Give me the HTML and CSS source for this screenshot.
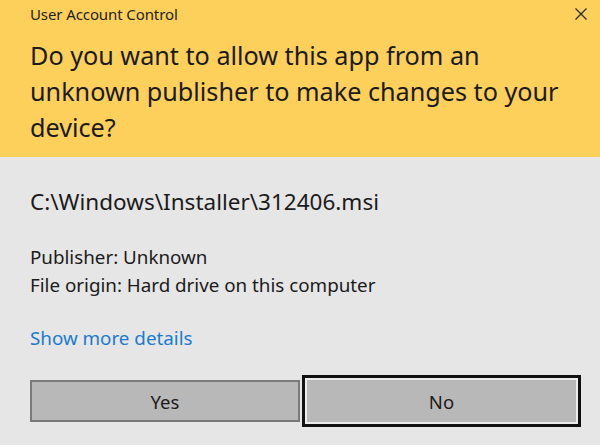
FILE: index.html
```html
<!DOCTYPE html>
<html>
<head>
<meta charset="utf-8">
<link rel="stylesheet" href="styles.css">
</head>
<body>
<div class="dialog">
  <header class="banner">
    <div class="titlebar">
      <span class="title">User Account Control</span>
      <svg class="close" width="14" height="14" viewBox="0 0 14 14"><path d="M1.5 1.5L12.5 12.5M12.5 1.5L1.5 12.5" stroke="#2b2b2b" stroke-width="1.3" fill="none"/></svg>
    </div>
    <h1 class="question">Do you want to allow this app from an unknown publisher to make changes to your device?</h1>
  </header>
  <main class="body">
    <p class="path">C:\Windows\Installer\312406.msi</p>
    <div class="meta">
      <p>Publisher: Unknown</p>
      <p>File origin: Hard drive on this computer</p>
    </div>
    <a class="details" href="#">Show more details</a>
    <div class="buttons">
      <button class="btn">Yes</button>
      <button class="btn focused">No</button>
    </div>
  </main>
</div>
</body>
</html>
```
FILE: styles.css
```css
* { box-sizing: border-box; }
html, body { margin: 0; padding: 0; }
body {
  width: 600px;
  height: 445px;
  background: #e6e6e6;
  font-family: "Noto Sans", "Open Sans", sans-serif;
  color: #1b1b1b;
  overflow: hidden;
}
.dialog { display: flex; flex-direction: column; height: 445px; }
.banner {
  background: #fdd05c;
  height: 157px;
  padding: 0 0 0 30px;
}
.titlebar {
  display: flex;
  justify-content: space-between;
  align-items: center;
  height: 28px;
  padding-right: 12px;
}
.title { font-size: 15px; color: #222; letter-spacing: -0.1px; }
.close { margin-top: -1px; }
.question {
  margin: 9px 0 0;
  font-weight: 400;
  font-size: 25.2px;
  line-height: 36px;
  width: 545px;
  color: #1a1a1a;
}
.body { padding: 30px 19px 0 30px; flex: 1; }
.body p { margin: 0; }
.path { font-size: 22.5px; line-height: 30px; }
.meta { margin-top: 26px; font-size: 18.8px; line-height: 28px; }
.details {
  display: inline-block;
  margin-top: 25px;
  font-size: 18.8px;
  line-height: 28px;
  color: #1a7bd0;
  text-decoration: none;
}
.buttons {
  display: flex;
  gap: 2px;
  margin-top: 23px;
  align-items: center;
}
.btn {
  width: 270px;
  height: 42px;
  background: #b8b8b8;
  border: 2px solid #7a7a7a;
  font-family: inherit;
  font-size: 18.5px;
  color: #1b1b1b;
  padding: 0;
}
.btn.focused {
  width: 279px;
  height: 52px;
  border: 3px solid #111;
  box-shadow: inset 0 0 0 2px #ececec;
}
```
